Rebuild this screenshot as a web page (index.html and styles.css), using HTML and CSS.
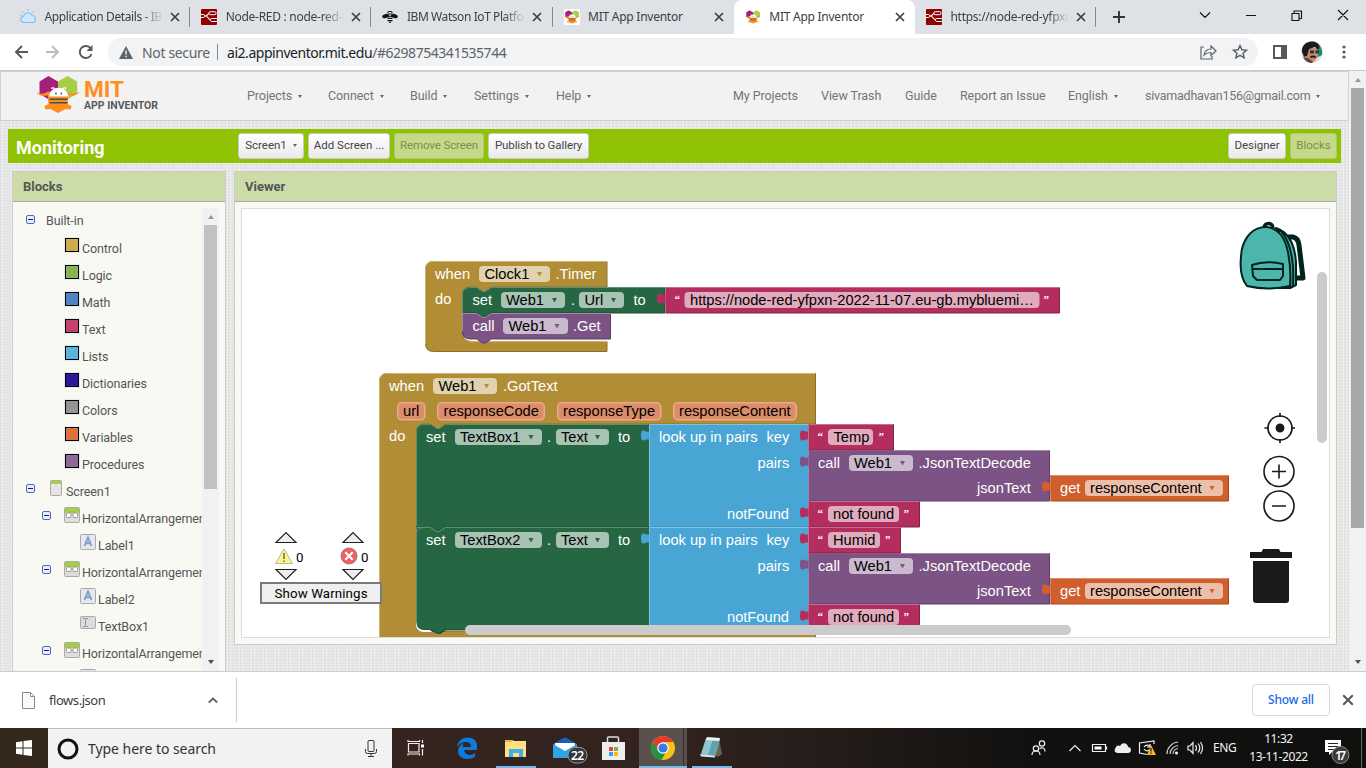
FILE: index.html
```html
<!DOCTYPE html>
<html lang="en">
<head>
<meta charset="utf-8">
<title>MIT App Inventor</title>
<link rel="stylesheet" href="styles.css">
</head>
<body>
<svg class="defs" width="0" height="0">
  <defs>
    <symbol id="x" viewBox="0 0 10 10"><path d="M1 1l8 8M9 1l-8 8" fill="none" stroke="currentColor" stroke-width="1.7"/></symbol>
    <symbol id="nodered" viewBox="0 0 16 16"><rect width="16" height="16" rx="1" fill="#8f0000"/><path d="M0 7h4c4 0 2-3 5-3M4 7c4 0 3 4 6 4" fill="none" stroke="#fff" stroke-width="1.2"/><rect x="8" y="2.700" width="7" height="3" rx="1.200" fill="#8f0000" stroke="#fff"/><rect x="9.500" y="9.500" width="7" height="3" rx="1.200" fill="#8f0000" stroke="#fff"/><rect x="-1.500" y="5.500" width="5" height="3" rx="1" fill="#8f0000" stroke="#fff"/></symbol>
    <symbol id="bee" viewBox="0 0 64 54"><path d="M18 0l14 8v18l-14 8L5 26V8z" fill="#a61f7c"/><path d="M46 0l14 8v18l-14 8-14-8V8z" fill="#a5cf47"/><path d="M0 24c8 3 12 2 17-1l28 0c7 4 13 3 19 0-5 5-10 7-17 5l-1 13 6 3-2 5-7-1-11 6-11-6-7 1-2-5 6-3-1-13C10 30 5 29 0 24z" fill="#ff8e1f"/><path d="M19 30c1-17 27-17 28 0z" fill="#fff"/><path d="M20 34h26M20 39h26" stroke="#4d4d4f" stroke-width="2.200"/><path d="M28 20l-3-3-3 1M38 20l3-3 3 1" fill="none" stroke="#fff" stroke-width="1.800"/><path d="M29 24v3M37 24v3" stroke="#4d4d4f" stroke-width="2"/></symbol>
    <symbol id="minus" viewBox="0 0 9 9"><rect x=".5" y=".5" width="8" height="8" rx="1.500" fill="#e9effb" stroke="#5167b5"/><path d="M2 4.500h5" stroke="#1414c8"/></symbol>
    <symbol id="harr" viewBox="0 0 16 16"><rect x=".5" y=".5" width="15" height="15" rx="1" fill="#ddd" stroke="#aaa"/><path d="M1 1h14v5H1z" fill="#a7cf45"/><rect x="2.500" y="6" width="4.500" height="4.500" rx="1" fill="#fff" stroke="#999"/><rect x="9" y="6" width="4.500" height="4.500" rx="1" fill="#fff" stroke="#999"/></symbol>
    <symbol id="lab" viewBox="0 0 16 16"><rect x=".5" y=".5" width="15" height="15" rx="1" fill="#e6e8ec" stroke="#aaa"/><path d="M4.500 12l3.500-8.500 3.500 8.500M5.800 9.300h4.400" fill="none" stroke="#7c9fd3" stroke-width="1.900"/></symbol>
    <symbol id="tbox" viewBox="0 0 16 16"><rect x=".5" y="1.500" width="15" height="12" rx="1" fill="#dcdcdc" stroke="#aaa"/><path d="M3 3.500h2l.5.500.5-.5h2M5.500 4v7M3 11.500h2l.5-.5.5.5h2" fill="none" stroke="#8a93a8"/></symbol>
  </defs>
</svg>

<div class="window">
  <div class="tabs">
    <div class="tab"><svg class="fav" viewBox="0 0 16 16"><path d="M3.500 13.500c-4-1-3-6 0-6 1-5 8-4 8.500-1 4.500.2 4.500 6.500 0 7z" fill="#cfe9ff" stroke="#82b9f2" stroke-width="1.100"/><path d="M8 0v2M2 2l1.500 1.500M14 2l-1.500 1.500M0 6h2" stroke="#5fd0dc"/></svg><span class="name fade n1">Application Details - IBM</span><svg class="close"><use href="#x"/></svg></div>
    <div class="tab"><svg class="fav"><use href="#nodered"/></svg><span class="name fade n2">Node-RED : node-red-y</span><svg class="close"><use href="#x"/></svg></div>
    <div class="tab"><svg class="fav" viewBox="0 0 16 16"><path d="M0 8l1-2 4-1.500 2 1.500v2L2 9.500zM16 8l-1-2-4-1.500L9 6v2l5 1.500z" fill="#111"/><path d="M5.500 3.500L7 2.500h2l1.500 1M6 5h4M6 7.200h4M5.500 9.400h5M5.500 11.600h5M7 13.300h2" fill="none" stroke="#111" stroke-width="1.100"/></svg><span class="name fade n3">IBM Watson IoT Platform</span><svg class="close"><use href="#x"/></svg></div>
    <div class="tab noline"><svg class="fav white" viewBox="0 0 64 54"><use href="#bee"/></svg><span class="name">MIT App Inventor</span><svg class="close"><use href="#x"/></svg></div>
    <div class="tab active"><svg class="fav" viewBox="0 0 64 54"><use href="#bee"/></svg><span class="name">MIT App Inventor</span><svg class="close"><use href="#x"/></svg></div>
    <div class="tab"><svg class="fav"><use href="#nodered"/></svg><span class="name fade n2">https://node-red-yfpxn</span><svg class="close"><use href="#x"/></svg></div>
    <svg class="plus" viewBox="0 0 12 12"><path d="M6 0v12M0 6h12" stroke="#333" stroke-width="1.900"/></svg>
    <svg class="winctl" viewBox="0 0 160 20"><g fill="none" stroke="#111" stroke-width="1.100"><path d="M4 7.500l5 5 5-5M50 10.500h10M96 8.500h7v7h-7zM98 8.500v-2.500h7.500v7.500H103M142 5l10 10M152 5l-10 10"/></g></svg>
  </div>

  <div class="toolbar">
    <svg class="navicons" viewBox="0 0 86 20"><g fill="none" stroke-width="1.900"><path d="M14 10H2M8 4l-6 6 6 6" stroke="#55585c"/><path d="M32 10h12M38 4l6 6-6 6" stroke="#b9bbbe"/><path d="M77.500 12a6 6 0 1 1-.8-5.500" stroke="#55585c"/></g><path d="M78.500 3v6h-6z" fill="#55585c"/></svg>
    <div class="omni">
      <svg class="warnicon" viewBox="0 0 14 13"><path d="M7 0l7 13H0z" fill="#5f6368"/><path d="M7 4.500v4M7 9.800v1.500" stroke="#fff" stroke-width="1.300"/></svg>
      <span class="notsecure">Not secure</span><span class="bar"></span><span class="url"><b>ai2.appinventor.mit.edu</b>/#6298754341535744</span>
      <svg class="omniicons" viewBox="0 0 50 18"><g fill="none" stroke="#5f6368" stroke-width="1.200"><path d="M4 4H1v12h11v-3M4 12c1-5 4-6 7-6V3l5 5-5 4.500V9.500C8 9.500 6 10 4 12z"/><path d="M40 2.500l1.900 4.200 4.600.5-3.400 3 1 4.500-4.100-2.300-4.100 2.300 1-4.500-3.400-3 4.600-.5z" stroke-width="1.500"/></g></svg>
    </div>
    <svg class="side" viewBox="0 0 14 14"><path d="M1 1h12v12H1z" fill="none" stroke="#55585c" stroke-width="2"/><path d="M8 0h6v14H8z" fill="#55585c"/></svg>
    <svg class="avatar" viewBox="0 0 22 22"><circle cx="11" cy="11" r="11" fill="#d9e6e2"/><path d="M16 2q6 4 5 12l-4 2z" fill="#248475"/><path d="M6 7l10 0 1 9-5 5.500-7-3z" fill="#c18b6c"/><path d="M1 11C0 3 9-2 16 2c4 3 2 5 1 7L14 6 8 8l-2 7-3 1z" fill="#21191a"/><path d="M9 9.500h4v3H9zM14 9.500h4v3h-3z" fill="#1d3b43"/><path d="M9 15.500q3-2 6 0l0 1.500q-3-1-6 0z" fill="#2b1a17"/><path d="M2 16l5 1 5 4-1 1q-6 0-9-6z" fill="#6b3d43"/></svg>
    <svg class="dots" viewBox="0 0 4 14"><g fill="#55585c"><circle cx="2" cy="2" r="1.600"/><circle cx="2" cy="7" r="1.600"/><circle cx="2" cy="12" r="1.600"/></g></svg>
  </div>

  <div class="page">
    <div class="content">
      <header class="top">
        <svg class="logo" viewBox="0 0 124 38"><svg width="44" height="37" viewBox="0 0 64 54"><use href="#bee"/></svg><text x="48" y="21" class="mit" textLength="40" lengthAdjust="spacingAndGlyphs">MIT</text><text x="48" y="33" class="appinv" textLength="74" lengthAdjust="spacingAndGlyphs">APP INVENTOR</text></svg>
        <nav class="left"><span>Projects<i></i></span><span>Connect<i></i></span><span>Build<i></i></span><span>Settings<i></i></span><span>Help<i></i></span></nav>
        <nav class="right"><span>My Projects</span><span>View Trash</span><span>Guide</span><span>Report an Issue</span><span>English<i></i></span><span class="mail">sivamadhavan156@gmail.com<i></i></span></nav>
      </header>
      <div class="project">
        <h1>Monitoring</h1>
        <button class="b1">Screen1<i></i></button><button class="b2">Add Screen ...</button><button class="b3 off">Remove Screen</button><button class="b4">Publish to Gallery</button>
        <button class="b5">Designer</button><button class="b6 off">Blocks</button>
      </div>
      <div class="panels">
        <section class="blocks">
          <h2>Blocks</h2>
          <div class="treewrap">
            <div class="tree">
              <div class="row r0"><svg class="m"><use href="#minus"/></svg><span>Built-in</span></div>
              <div class="row cat"><i class="control"></i><span>Control</span></div>
              <div class="row cat"><i class="logic"></i><span>Logic</span></div>
              <div class="row cat"><i class="math"></i><span>Math</span></div>
              <div class="row cat"><i class="text"></i><span>Text</span></div>
              <div class="row cat"><i class="lists"></i><span>Lists</span></div>
              <div class="row cat"><i class="dicts"></i><span>Dictionaries</span></div>
              <div class="row cat"><i class="colors"></i><span>Colors</span></div>
              <div class="row cat"><i class="vars"></i><span>Variables</span></div>
              <div class="row cat"><i class="procs"></i><span>Procedures</span></div>
              <div class="row scr"><svg class="m"><use href="#minus"/></svg><svg class="ic" viewBox="0 0 16 16"><rect x="2.500" y=".5" width="11" height="15" rx="1" fill="#e4e4e4" stroke="#aaa"/><path d="M3 1h10v3H3z" fill="#a7cf45"/></svg><span>Screen1</span></div>
              <div class="row ha"><svg class="m"><use href="#minus"/></svg><svg class="ic"><use href="#harr"/></svg><span>HorizontalArrangement1</span></div>
              <div class="row leaf"><svg class="ic"><use href="#lab"/></svg><span>Label1</span></div>
              <div class="row ha"><svg class="m"><use href="#minus"/></svg><svg class="ic"><use href="#harr"/></svg><span>HorizontalArrangement2</span></div>
              <div class="row leaf"><svg class="ic"><use href="#lab"/></svg><span>Label2</span></div>
              <div class="row leaf"><svg class="ic"><use href="#tbox"/></svg><span>TextBox1</span></div>
              <div class="row ha"><svg class="m"><use href="#minus"/></svg><svg class="ic"><use href="#harr"/></svg><span>HorizontalArrangement3</span></div>
              <div class="row leaf"><svg class="ic"><use href="#lab"/></svg></div>
            </div>
            <div class="sbar tsb"><i class="up"></i><i class="thumb"></i><i class="down"></i></div>
          </div>
        </section>
        <section class="viewer">
          <h2>Viewer</h2>
          <svg class="canvas" viewBox="242 209 1087 428">
            <defs>
              <path id="tab" d="M8.500 4v1c0 8-8.500-5-8.500 6.500s8.500-1.500 8.500 6.500v1z"/>
              <path id="dd" d="M0 0h5l-2.500 4.500z"/>
              <g id="setblock">
                <path fill="#266643" stroke="#1b4b31" d="M416.500 432q0-7.500 8-7.500h6l6 4h3l6-4h204v102.500h-204l-6 4h-3l-6-4h-14z"/>
                <path fill="none" stroke="#5d9173" d="M416.500 526v-94q0-7.500 8-7.500h6l6 4h3l6-4h203"/>
                <path fill="#49a6d4" stroke="#3a86ad" d="M649.500 424.500h159.500v102.500h-159.500z"/>
                <path fill="none" stroke="#80c2e2" d="M649.500 527v-102.500H809"/>
                <use href="#tab" x="641" y="424" fill="#49a6d4"/>
                <path fill="#7c5385" stroke="#5e3e66" d="M808.500 450.500h241v50.500h-241z"/><path fill="none" stroke="#a386a9" d="M808.500 501v-50.500h241"/>
                <use href="#tab" x="800" y="450" fill="#7c5385"/>
                <path fill="#d05f2d" stroke="#a34a22" d="M1050.500 475.500h178v25.500h-178z"/><path fill="none" stroke="#de8e6c" d="M1050.500 501v-25.500h178"/>
                <use href="#tab" x="1042" y="475" fill="#d05f2d"/>
                <path fill="#b32d5e" stroke="#852246" d="M808.500 501.500h111v25.500h-111z"/><path fill="none" stroke="#ca6c8e" d="M808.500 527v-25.500h111"/>
                <use href="#tab" x="800" y="501" fill="#b32d5e"/><use href="#tab" x="800" y="424" fill="#b32d5e"/>
                <g fill="#fff" fill-opacity=".6"><rect x="455" y="429" width="87" height="16" rx="4"/><rect x="556" y="429" width="53" height="16" rx="4"/><rect x="849" y="455" width="64" height="16" rx="4"/><rect x="1085" y="480" width="138" height="16" rx="4"/><rect x="828" y="506" width="71" height="16" rx="4"/></g>
                <use href="#dd" x="528.500" y="435" fill="#266643"/><use href="#dd" x="595" y="435" fill="#266643"/><use href="#dd" x="900" y="461" fill="#7c5385"/><use href="#dd" x="1209.500" y="486" fill="#d05f2d"/>
              </g>
            </defs>
            <g class="blk">
              <path fill="#b18e35" stroke="#8b702a" d="M425.500 269.500q0-8 8-8H607V287H471q-8 0-8 8v39q0 7.500 8 7.500H607v10H433.500q-8 0-8-8z"/>
              <path fill="#b18e35" d="M475 286h18v6h-18z"/>
              <path fill="none" stroke="#ccb36f" d="M425.500 344v-74.500q0-8 8-8H607M464 336q1 5.500 8 5.500H607"/>
              <path fill="#266643" stroke="#1b4b31" d="M462.500 295q0-7.500 8-7.500h6l6 4h3l6-4h173.500v25.500h-173.500l-6 4h-3l-6-4h-14z"/>
              <path fill="none" stroke="#5d9173" d="M462.500 313v-18q0-7.500 8-7.500h6l6 4h3l6-4H665"/>
              <path fill="#7c5385" stroke="#5e3e66" d="M462.500 313.500h14l6 4h3l6-4h119v25.500h-119l-6 4h-3l-6-4h-6q-8 0-8-8z"/>
              <path fill="#266643" d="M477 312.500h14l-5.500 4.500h-3z"/>
              <path fill="none" stroke="#a386a9" d="M462.500 331v-17.500h14l6 4h3l6-4H611"/>
              <path fill="#b32d5e" stroke="#852246" d="M665.500 287.500h394v25.500h-394z"/><path fill="none" stroke="#ca6c8e" d="M665.500 313v-25.500h394"/>
              <use href="#tab" x="657" y="287" fill="#b32d5e"/>
              <g fill="#fff" fill-opacity=".6"><rect x="479" y="266" width="71" height="16" rx="4"/><rect x="501" y="292" width="64" height="16" rx="4"/><rect x="579" y="292" width="45" height="16" rx="4"/><rect x="503" y="318" width="65" height="16" rx="4"/><rect x="684.500" y="292" width="355" height="16" rx="4"/></g>
              <use href="#dd" x="537" y="272" fill="#b18e35"/><use href="#dd" x="552" y="298" fill="#266643"/><use href="#dd" x="611" y="298" fill="#266643"/><use href="#dd" x="554.500" y="324" fill="#7c5385"/>
              <text x="435" y="279">when</text><text x="484.500" y="279" class="k">Clock1</text><text x="555.500" y="279">.Timer</text>
              <text x="435" y="304">do</text><text x="472.500" y="305">set</text><text x="506" y="305" class="k">Web1</text><text x="571" y="305">.</text><text x="584.500" y="305" class="k">Url</text><text x="633.500" y="305">to</text>
              <text x="674.500" y="303" class="q">“</text><text x="690" y="305" class="k" textLength="344">https://node-red-yfpxn-2022-11-07.eu-gb.mybluemi…</text><text x="1043.500" y="303" class="q">”</text>
              <text x="472.500" y="331">call</text><text x="508.500" y="331" class="k">Web1</text><text x="573" y="331">.Get</text>

              <path fill="#b18e35" stroke="#8b702a" d="M379.500 381.500q0-8 8-8H815.500V424H425q-8 0-8 8v192q0 7.500 8 7.500H815.500v16H379.500z"/>
              <path fill="none" stroke="#ccb36f" d="M379.500 640V381.500q0-8 8-8H815"/>
              <path fill="#b18e35" d="M429 423h18v6h-18z"/>
              <path fill="#266643" d="M416 520h233v20h-233z"/>
              <use href="#setblock"/>
              <g transform="translate(0 103)"><use href="#setblock"/></g>
              <path fill="#266643" d="M416 526h15l6 4.500h3l6-4.500h1v1h-1l-5 4h-4l-6-4h-8q-6 0-7 5z"/>
              <path fill="none" stroke="#5d9173" d="M416.500 534v-6.500h14l6 4h3l6-4h6"/>
              <path fill="#b18e35" d="M410 623h6v5q1 3.500 7 3.500h10l5 2.500h3l5-2.500h369v10H410z"/>
              <path fill="#fff" d="M416 622v4q1 6 9 6h7l-2-2h-6q-7 0-8-8z"/>
              <path fill="#266643" stroke="#1b4b31" d="M430.500 630l6 3h3l6-3"/>
              <path fill="#b32d5e" stroke="#852246" d="M808.500 424.500h85V450h-85zM808.500 527.500h92V553h-92z"/><path fill="none" stroke="#ca6c8e" d="M808.500 450v-25.500h85M808.500 553v-25.500h92"/>
              <g fill="#fff" fill-opacity=".6"><rect x="433" y="378" width="64" height="16" rx="4"/><rect x="828" y="429" width="45" height="16" rx="4"/><rect x="828" y="532" width="52" height="16" rx="4"/></g><use href="#dd" x="484" y="384" fill="#b18e35"/>
              <g class="param"><rect x="397.800" y="402.800" width="27" height="17" rx="4"/><rect x="437.800" y="402.800" width="106.500" height="17" rx="4"/><rect x="557.800" y="402.800" width="103" height="17" rx="4"/><rect x="673.800" y="402.800" width="122.500" height="17" rx="4"/></g>
              <text x="389" y="391">when</text><text x="438.500" y="391" class="k">Web1</text><text x="503" y="391">.GotText</text>
              <text x="403" y="416" class="k">url</text><text x="443.500" y="416" class="k">responseCode</text><text x="563" y="416" class="k">responseType</text><text x="679" y="416" class="k">responseContent</text>
              <text x="389" y="441">do</text>
              <g><text x="426" y="442">set</text><text x="460" y="442" class="k">TextBox1</text><text x="547" y="442">.</text><text x="561" y="442" class="k">Text</text><text x="618" y="442">to</text><text x="659" y="442">look up in pairs</text><text x="766.500" y="442">key</text><text x="817.500" y="440" class="q">“</text><text x="833.500" y="442" class="k">Temp</text><text x="878.500" y="440" class="q">”</text>
              <text x="757.500" y="468">pairs</text><text x="818" y="468">call</text><text x="854" y="468" class="k">Web1</text><text x="918.500" y="468">.JsonTextDecode</text><text x="977" y="493">jsonText</text><text x="1060" y="493">get</text><text x="1090" y="493" class="k">responseContent</text><text x="727" y="519">notFound</text><text x="817.500" y="517" class="q">“</text><text x="833" y="519" class="k">not found</text><text x="903.500" y="517" class="q">”</text></g>
              <g transform="translate(0 103)"><text x="426" y="442">set</text><text x="460" y="442" class="k">TextBox2</text><text x="547" y="442">.</text><text x="561" y="442" class="k">Text</text><text x="618" y="442">to</text><text x="659" y="442">look up in pairs</text><text x="766.500" y="442">key</text><text x="817.500" y="440" class="q">“</text><text x="833" y="442" class="k">Humid</text><text x="885" y="440" class="q">”</text>
              <text x="757.500" y="468">pairs</text><text x="818" y="468">call</text><text x="854" y="468" class="k">Web1</text><text x="918.500" y="468">.JsonTextDecode</text><text x="977" y="493">jsonText</text><text x="1060" y="493">get</text><text x="1090" y="493" class="k">responseContent</text><text x="727" y="519">notFound</text><text x="817.500" y="517" class="q">“</text><text x="833" y="519" class="k">not found</text><text x="903.500" y="517" class="q">”</text></g>
            </g>
            <g class="warn">
              <g fill="#eee" stroke="#222" stroke-width="1.200"><path d="M276 542.500h20l-10-10zM343 542.500h20l-10-10zM276 569.500h20l-10 10zM343 569.500h20l-10 10z"/></g>
              <path d="M284 549l8.500 14.500h-17z" fill="#fcf794" stroke="#b9b78d" stroke-linejoin="round"/><path d="M284 553v6M284 560.500v1.500" stroke="#85843f" stroke-width="1.800"/>
              <circle cx="349" cy="556" r="8" fill="#fa5a5a" stroke="#888"/><path d="M345.300 552.300l7.400 7.400M352.700 552.300l-7.400 7.400" stroke="#fff" stroke-width="2.300"/>
              <text x="296" y="562">0</text><text x="361" y="562">0</text>
              <rect x="261" y="583" width="120" height="20" fill="#eee" stroke="#7a7a7a" stroke-width="2" fill-opacity=".97"/><text x="274.500" y="598" textLength="93">Show Warnings</text>
            </g>
            <g stroke="#00241d" stroke-width="2" stroke-linejoin="round" fill="none">
              <path d="M1288 237h5q5 1 6 8l4 33h-9" stroke-width="5"/>
              <path d="M1264 228c0-6 9-6 9 0" stroke-width="3.500"/>
              <path d="M1276 228q18 6 20 34l0 23-6 3-11 0z" fill="#4db6ac"/>
              <path d="M1281 231q14 16 12 55l-3 2q2-35-13-57z" fill="#4db6ac"/>
              <path d="M1241 257c1-34 38-42 46-9 3 12 4 25 3 38q-22 5-43 0-8-10-6-29z" fill="#4db6ac"/>
              <path d="M1252 265q14-5 31-1v12l-3 4h-23l-4-4zM1252 269h30"/>
            </g>
            <g fill="none" stroke="#1a1a1a" stroke-width="1.700"><circle cx="1280" cy="428" r="12"/><path d="M1280 413v4M1280 439v4M1264.500 428h4M1291 428h4"/><circle cx="1280" cy="428" r="3.600" fill="#1a1a1a"/><circle cx="1279" cy="471.500" r="15" stroke-width="1.600"/><circle cx="1279" cy="506" r="15" stroke-width="1.600"/><path d="M1272 471.500h14M1279 464.500v14M1272 506h14" stroke-width="1.600"/></g>
            <path fill="#1a1a1a" d="M1250 552h11.500l1.500-3h16l1.500 3H1292v6h-42zM1253 561h36v39q0 3-3 3h-30q-3 0-3-3z"/>
            <rect x="465" y="625" width="606" height="10" rx="5" fill="#ccc"/><rect x="1317" y="272" width="10" height="171" rx="5" fill="#ccc"/>
          </svg>
        </section>
      </div>
    </div>
    <div class="sbar psb"><i class="up"></i><i class="thumb"></i><i class="down"></i></div>
  </div>

  <div class="downloads">
    <svg class="file" viewBox="0 0 13 17"><path d="M.5.500h8l4 4v12H.5zM8.500.500v4h4" fill="#fafafa" stroke="#8b8b8b"/></svg><span>flows.json</span>
    <svg class="chev" viewBox="0 0 10 7"><path d="M.8 5.500L5 1.500l4.200 4" fill="none" stroke="#5f6368" stroke-width="1.800"/></svg>
    <span class="div"></span><button class="showall">Show all</button><svg class="close big" viewBox="0 0 10 10"><use href="#x"/></svg>
  </div>

  <div class="taskbar">
    <div class="start"><svg viewBox="0 0 16 16"><path d="M0 2.200l6.500-.9v6.200H0zM7.500 1.100L16 0v7.500H7.500zM0 8.500h6.500v6.200L0 13.800zM7.500 8.500H16V16l-8.500-1.100z" fill="#fff"/></svg></div>
    <div class="search"><svg class="ring" viewBox="0 0 22 22"><circle cx="11" cy="11" r="9" fill="none" stroke="#111" stroke-width="3"/></svg><span>Type here to search</span><svg class="mic" viewBox="0 0 12 17"><g fill="none" stroke="#333"><rect x="3" y=".5" width="6" height="11" rx="1"/><path d="M.5 9v2.500q0 2 2 2h7q2 0 2-2V9M6 14v2.500M3 16.500h6"/></g></svg></div>
    <svg class="apps" viewBox="392 728 348 40">
      <g fill="none" stroke="#eee" stroke-width="1.200"><path d="M408.500 743.500h10.500v8.500h-10.500zM408 740v1.500h11.500V740M408 755.500V754h11.500v1.500M422.500 740v3M422.500 749v6.500"/></g><path d="M421 744.500h3v3h-3z" fill="#fff"/>
      <path d="M457 747c1-12 20-13 20-1v4h-13c1 6 8 6 11 3v4c-7 4-17 2-17-6 0-4 3-7 6-8-2 2-1 3-1 4h8c0-7-10-6-14 0z" fill="#0b7bdc"/>
      <path d="M505 740h7l2 1h12v16h-21z" fill="#ffdf82"/><path d="M505 740h7v2h-7z" fill="#e9b73d"/><path d="M509 757v-8h14v8h-4v-4h-6v4z" fill="#3fb1e8"/>
      <path d="M553 744l12-7 12 7v14h-24z" fill="#1660b5"/><path d="M555 743h20v8l-10 3-10-5z" fill="#fff"/><path d="M553 744l12 7 12-7v14h-24z" fill="#31a3ea"/>
      <rect x="568" y="747.500" width="19" height="15.500" rx="7.500" fill="#32373a" stroke="#999"/><text x="571" y="759.500" class="badge" textLength="13">22</text>
      <path d="M602 742h23v18h-23z" fill="#eee"/><path d="M607.500 742v-4q0-1 1-1h9q1 0 1 1v4" fill="none" stroke="#ddd" stroke-width="1.500"/><path d="M609 747h4v4h-4z" fill="#e5492c"/><path d="M614 747h4v4h-4z" fill="#7cb83e"/><path d="M609 752h4v4h-4z" fill="#2ca4e5"/><path d="M614 752h4v4h-4z" fill="#fab619"/>
      <path d="M639 728h48v40h-48z" fill="#5a504e"/><path d="M683.500 728v40" stroke="#342d2b"/>
      <circle cx="663" cy="748" r="12" fill="#fbc116"/><path d="M652.600 742a12 12 0 0 1 20.800 0H663l-5 9z" fill="#e33b2e"/><path d="M652.600 742l6 9 6.500 2.500-3.500 6.500A12 12 0 0 1 652.600 742z" fill="#229342"/><circle cx="663" cy="748" r="5.800" fill="#fff"/><circle cx="663" cy="748" r="4.600" fill="#3b78e7"/>
      <path d="M719 739l3 15-4 3-3-2z" fill="#6d6048"/><path d="M706 738l14 1-5 18-14-3z" fill="#8cc7d2"/><path d="M713 739l7 0-5 17-7-1z" fill="#5fa3b0"/><path d="M707 737l13 1-1 3-13-1z" fill="#eef5f5"/><path d="M700 754l15 2v1.500l-14-1z" fill="#e6e6e6"/>
      <path d="M496 766h40v2h-40zM639 766h48v2h-48zM692 766h40v2h-40z" fill="#76b9ed"/>
    </svg>
    <svg class="tray" viewBox="1026 728 184 40"><g fill="none" stroke="#eee" stroke-width="1.200"><circle cx="1042" cy="743.500" r="2.700"/><path d="M1039.500 748.500q5.500-2 5.500 3"/><circle cx="1036" cy="748.500" r="2.700"/><path d="M1032 755q0-4 4-4t4 4"/><path d="M1069.500 751l5.500-5.500 5.500 5.500"/><path d="M1092.500 744.500h13v7h-13zM1106.500 746.500v3"/><path d="M1154 744v-3l-14.500 2v10l7.500 1.500M1144 747q2-3 6-1M1150 744v3h-3M1149 750q-3 2-5-1"/><path d="M1167 754a12 12 0 0 1 11-12M1170 754a9 9 0 0 1 8-8.500M1173 754a6 6 0 0 1 5-5.500" stroke="#ccc"/><path d="M1188 746h2l3-3.500v11l-3-3.500h-2zM1195.500 745q2 3 0 6M1198 743.500q3.500 4.500 0 9M1200.500 742q4 6 0 12"/></g><path d="M1094.500 746.500h7v3h-7z" fill="#fff"/><circle cx="1176.500" cy="753" r="1.500" fill="#fff"/><path d="M1115 749c1-4 4-4 5-3 3-5 8-2 8 1 4 0 4 6 0 6h-9c-4 0-5-2-4-4z" fill="#eee"/><path d="M1151 745l5 10h-9z" fill="#fbb914"/><path d="M1151 748v3.500M1151 752.500v1.200" stroke="#222" stroke-width="1.300"/></svg>
    <span class="eng">ENG</span>
    <div class="clock"><span class="time">11:32</span><span class="date">13-11-2022</span></div>
    <svg class="notif" viewBox="1320 728 46 40"><path d="M1325 740h16v12h-9l-3 3v-3h-4z" fill="#fff"/><path d="M1328 743.500h10M1328 746.500h10M1328 749.500h6" stroke="#222"/><circle cx="1340.500" cy="755" r="8.500" fill="#3a3a3a" stroke="#888"/><text x="1335" y="759.500" class="badge" textLength="11">17</text><path d="M1361.500 728v40" stroke="#666"/></svg>
  </div>
</div>
</body>
</html>
```
FILE: styles.css
```css
* { box-sizing: border-box; }
body { margin: 0; font-family: "Noto Sans", sans-serif; }
svg { display: block; flex: none; }
.defs { position: absolute; }
.window { width: 1366px; height: 768px; overflow: hidden; display: flex; flex-direction: column; background: #fff; }
.tabs { height: 34px; flex: none; background: #dee1e6; display: flex; align-items: center; padding-left: 9px; }
.tab { width: 181.200px; height: 34px; display: flex; align-items: center; padding: 0 10px 0 11px; background: linear-gradient(#85888c, #85888c) right 0 top 7px / 1px 20px no-repeat; }
.tab.noline { background: none; }
.tab.active { background: #fff; border-radius: 8px 8px 0 0; }
.fav { width: 16px; height: 16px; margin-right: 8.500px; }
.fav.white { background: #fff; }
.name { width: 120.500px; font-size: 12px; letter-spacing: -.25px; color: #3c4043; white-space: nowrap; overflow: hidden; line-height: 20px; }
.fade { width: 118.500px; margin-right: 2px; -webkit-mask-image: linear-gradient(90deg, #000 82%, transparent); mask-image: linear-gradient(90deg, #000 82%, transparent); }
.n1 { letter-spacing: -.4px; }
.n2 { letter-spacing: -.28px; }
.n3 { letter-spacing: -.42px; }
.close { width: 10px; height: 10px; margin-left: 5px; color: #3c4043; }
.plus { width: 12px; height: 12px; margin-left: 17px; }
.winctl { width: 160px; height: 20px; margin: -5px 10px 0 auto; }
.toolbar { height: 37px; flex: none; display: flex; align-items: center; border-bottom: 1px solid #c8c9cb; padding-left: 14px; }
.navicons { width: 86px; height: 20px; }
.omni { width: 1150px; height: 28px; border-radius: 14px; margin-left: 8px; background: #f1f3f4; display: flex; align-items: center; padding: 0 8px 0 11px; font-size: 14px; }
.warnicon { width: 14px; height: 13px; margin-right: 9px; }
.notsecure { color: #5f6368; width: 75px; letter-spacing: -.35px; white-space: nowrap; }
.bar { width: 1px; height: 16px; background: #888; }
.url { color: #5f6368; margin-left: 9px; letter-spacing: -.46px; }
.url b { font-weight: 400; color: #202124; }
.omniicons { width: 50px; height: 18px; margin-left: auto; }
.side { width: 14px; height: 14px; margin-left: 15px; }
.avatar { width: 22px; height: 22px; margin-left: 14px; }
.dots { width: 4px; height: 14px; margin-left: 19px; }
.page { height: 601px; flex: none; display: flex; overflow: hidden; border-bottom: 1px solid #ccc; }
.content { width: 1349px; font-family: Roboto, sans-serif; background-color: #eee; background-image: radial-gradient(circle at 1px 1px, #dcdcdc .6px, transparent .9px), radial-gradient(circle at 1px 1px, #e4e4e4 .6px, transparent .9px); background-size: 3px 3px, 4px 2px; }
.top { height: 50px; border: 1px solid #d0d0d0; background: #f2f2f2; display: flex; align-items: center; }
.logo { width: 124px; height: 38px; margin-left: 35px; margin-top: -2px; }
.mit { font: 700 22px Roboto, sans-serif; fill: #ff8e1f; }
.appinv { font: 700 11.500px Roboto, sans-serif; fill: #58595b; }
.left, .right { display: grid; font-size: 12.500px; color: #747474; white-space: nowrap; letter-spacing: -.08px; margin-top: -2px; }
.left { grid-template-columns: 81px 82px 64px 82px 60px; margin-left: 87px; }
.right { grid-template-columns: 88px 84px 55px 108px 77px 180px; margin-left: 117px; }
.mail { letter-spacing: -.24px; }
nav i, button i { display: inline-block; border: 2.500px solid transparent; border-top: 3.500px solid #666; border-bottom: 0; margin-left: 6px; vertical-align: 2px; }
.project { height: 34px; margin: 8px 8px 0; background: #8fc202; display: flex; align-items: center; padding: 0 4px 0 8px; }
.project h1 { width: 222px; margin: 2px 0 0; color: #fff; font-size: 18px; letter-spacing: 0; }
.project button { height: 26px; padding: 0 0 2px; border: 1px solid #c8c8c8; border-radius: 3px; background: linear-gradient(#fff, #eaeaea); color: #444; font: 11.500px Roboto, sans-serif; margin-right: 4px; white-space: nowrap; }
.project .off { background: #c5d98b; border-color: #b2cb72; color: #7d8f49; }
.b1 { width: 66px; } .b2 { width: 82px; } .b3 { width: 90px; } .b4 { width: 101px; } .b5 { width: 58px; } .b6 { width: 47px; }
.project .b3, .project .b4 { letter-spacing: -.1px; }
.project .b5 { margin-left: auto; } .project .b6 { margin-right: 0; }
.panels { display: flex; margin: 8px 0 0 12px; align-items: flex-start; }
.blocks, .viewer { border: 1px solid #ccc; background: #f8f9f3; }
.blocks { width: 214px; height: 505px; margin-right: 8px; }
.viewer { width: 1103px; height: 474px; }
h2 { height: 30px; margin: 0; padding-left: 10px; font-size: 13px; line-height: 29px; color: #555; font-weight: 700; background: #ccdca9; border-bottom: 1px solid #aaa; }
.canvas { width: 1089px; height: 430px; margin: 6px 0 0 6px; border: 1px solid #ddd; background: #fff; }
.treewrap { display: flex; height: 463px; margin-top: 6px; overflow: hidden; }
.tree { width: 189px; overflow: hidden; font-size: 12.500px; color: #555; letter-spacing: -.1px; }
.row { height: 27px; display: flex; align-items: center; white-space: nowrap; }
.r0 { height: 24px; padding-left: 13px; margin-bottom: 2px; }
.row .m { width: 9px; height: 9px; margin-top: -4px; }
.r0 .m { margin-right: 11px; margin-top: -2px; }
.cat { padding-left: 52px; }
.cat i { width: 14px; height: 14px; border: 1px solid #000; outline: 1px solid #e3eaf4; margin-right: 3px; margin-top: -6px; }
.cat span, .scr span, .ha span, .leaf span { padding-top: 1px; }
.control { background: #ceab4b; } .logic { background: #88b552; } .math { background: #5083c1; } .text { background: #c4426e; } .lists { background: #5ab4dc; } .dicts { background: #2d1799; } .colors { background: #949494; } .vars { background: #dc733b; } .procs { background: #906898; }
.row .ic { width: 16px; height: 16px; margin: -6px 2px 0 0; }
.scr { padding-left: 13px; } .scr .ic { margin-left: 13px; }
.ha { padding-left: 29px; } .ha .ic { margin-left: 13px; }
.leaf { padding-left: 67px; }
.sbar { width: 17px; background: #f1f1f1; display: flex; flex-direction: column; align-items: center; }
.sbar .up, .sbar .down { border: 3.500px solid transparent; border-bottom: 4px solid #999; border-top: 0; margin-top: 7px; }
.sbar .down { border-top: 4px solid #505050; border-bottom: 0; margin-top: auto; margin-bottom: 7px; }
.sbar .thumb { width: 13px; background: #c1c1c1; margin-top: 6px; }
.tsb .thumb { height: 264px; } .psb .thumb { height: 440px; background: #a8a8a8; }
.blk { font: 14.667px "Liberation Sans", Arial, sans-serif; fill: #fff; }
.blk .k { fill: #000; }
.blk .q { font: 700 11px "Liberation Serif", serif; fill: #fff; }
.param rect { fill: #dc8c69; stroke: #eba98d; stroke-width: 1.600; }
.warn { font: 13.300px Roboto, sans-serif; }
.downloads { height: 56px; flex: none; display: flex; align-items: center; padding: 0 13px 0 22px; color: #3c4043; font-size: 13px; letter-spacing: -.45px; }
.file { width: 13px; height: 17px; margin-right: 14px; }
.downloads > span:not(.div) { width: 159px; }
.chev { width: 10px; height: 7px; }
.div { width: 1px; height: 44px; background: #ccc; margin-left: 18px; }
.showall { width: 78px; height: 32px; margin-left: auto; border: 1px solid #d5d7da; border-radius: 4px; background: #fff; color: #1a6ae8; font: 500 12px "Noto Sans", sans-serif; letter-spacing: -.2px; padding: 0 0 2px; }
.close.big { width: 12px; height: 12px; margin-left: 12px; margin-right: -1px; color: #55585c; }
.taskbar { height: 40px; flex: none; display: flex; align-items: center; background: linear-gradient(90deg, #33281b, #35241e 35%, #32231f 48%, #251d1a 60%, #12110f 75%, #0f0f0d); color: #f5f5f5; font-size: 12px; }
.start { width: 48px; padding-left: 16px; } .start svg { width: 16px; height: 16px; }
.search { width: 344px; height: 40px; border-top: 1px solid #bbb; background: #f2f2f2; display: flex; align-items: center; padding: 0 15px 0 9px; color: #333; font-size: 14px; letter-spacing: -.05px; }
.ring { width: 22px; height: 22px; margin-right: 9px; } .mic { width: 12px; height: 17px; margin-left: auto; }
.apps { width: 348px; height: 40px; } .tray { width: 184px; height: 40px; margin-left: 286px; }
.badge { font: 600 12px "Noto Sans", sans-serif; fill: #fff; }
.eng { width: 30px; margin-left: 3px; letter-spacing: -.45px; margin-top: -1px; }
.clock { width: 71px; display: flex; flex-direction: column; align-items: center; line-height: 18px; letter-spacing: -.4px; white-space: nowrap; }
.notif { width: 46px; height: 40px; margin-left: auto; }
```
